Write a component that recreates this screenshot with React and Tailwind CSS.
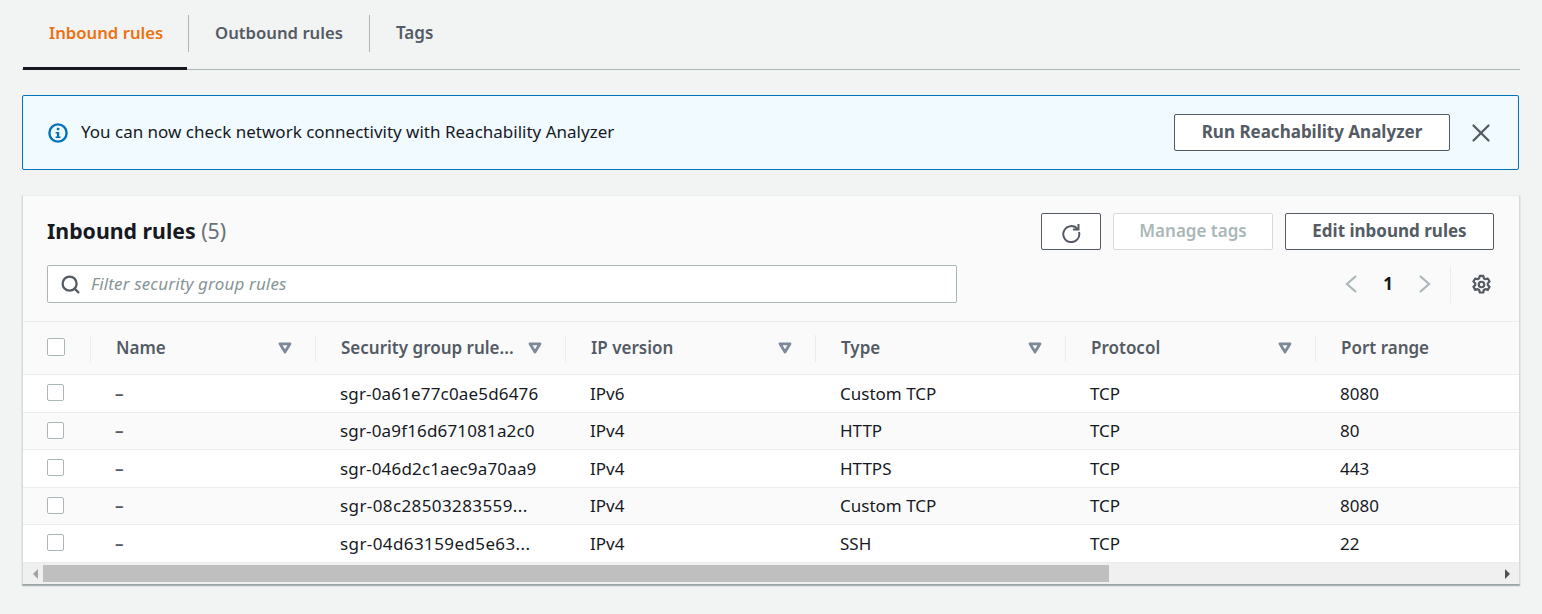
import { X, Search } from 'lucide-react'

const columns = [
  { label: 'Name', width: 'w-[225px]' },
  { label: 'Security group rule...', width: 'w-[250px]' },
  { label: 'IP version', width: 'w-[250px]' },
  { label: 'Type', width: 'w-[250px]' },
  { label: 'Protocol', width: 'w-[250px]' },
]

const rows = [
  { id: 'sgr-0a61e77c0ae5d6476', ip: 'IPv6', type: 'Custom TCP', port: '8080', height: 'h-[38px]', spacing: 'tracking-[0.16px]' },
  { id: 'sgr-0a9f16d671081a2c0', ip: 'IPv4', type: 'HTTP', port: '80', height: 'h-[37px]', spacing: 'tracking-[0.16px]' },
  { id: 'sgr-046d2c1aec9a70aa9', ip: 'IPv4', type: 'HTTPS', port: '443', height: 'h-[38px]', spacing: 'tracking-[0.16px]' },
  { id: 'sgr-08c28503283559...', ip: 'IPv4', type: 'Custom TCP', port: '8080', height: 'h-[37px]', spacing: 'tracking-[0.4px]' },
  { id: 'sgr-04d63159ed5e63...', ip: 'IPv4', type: 'SSH', port: '22', height: 'h-[38px]', spacing: 'tracking-[0.4px]' },
]

function Checkbox({ size = 'w-[17px] h-[17px]' }) {
  return <span className={`block ${size} bg-white border border-[#aab7b8] rounded-[2px]`} />
}

function SortIcon() {
  return (
    <svg width="14" height="12" viewBox="0 0 14 12" fill="none">
      <path d="M2 1.800h10L7 10z" stroke="#7d8998" strokeWidth="2.800" strokeLinejoin="round" />
    </svg>
  )
}

function RefreshIcon() {
  return (
    <svg width="22" height="22" viewBox="0 0 22 22" fill="none" stroke="#545b64" strokeWidth="2">
      <path d="M17.6 8.200A8 8 0 1 0 19 11" />
      <path d="M18.500 3v5.600h-5.600" />
    </svg>
  )
}

function InfoIcon() {
  return (
    <svg width="20" height="20" viewBox="0 0 20 20" fill="none">
      <circle cx="10" cy="10" r="8.600" stroke="#0073bb" strokeWidth="2.400" />
      <rect x="8.800" y="4.800" width="2.600" height="2.400" fill="#0073bb" />
      <path d="M7.600 9h3.600v4.400h1.300v1.600H7.600v-1.600h1.300v-2.800H7.600z" fill="#0073bb" />
    </svg>
  )
}

function GearIcon() {
  return (
    <svg width="21" height="21" viewBox="0 0 20 20" fill="none" stroke="#545b64" strokeWidth="2.100" strokeLinejoin="round">
      <path d="M8.300 1.800h3.400l.5 2.300 1.500.9 2.300-.7 1.700 2.900-1.700 1.600v1.800l1.700 1.600-1.700 2.900-2.300-.7-1.500.9-.5 2.300H8.300l-.5-2.300-1.500-.9-2.300.7-1.700-2.900 1.700-1.600V8.800L2.300 7.200 4 4.300l2.300.7 1.500-.9z" />
      <circle cx="10" cy="10" r="2.600" />
    </svg>
  )
}

function Chevron({ dir }) {
  return (
    <svg width="14" height="20" viewBox="0 0 14 20" fill="none" stroke="#aab7b8" strokeWidth="2.200">
      <path d={dir === 'left' ? 'M12 2 3 10l9 8' : 'M2 2l9 8-9 8'} />
    </svg>
  )
}

export default function App() {
  return (
    <div
      className="min-h-[614px] bg-[#f2f3f3] pl-[22px] pr-[22px] text-[17px] text-[#16191f]"
      style={{ fontFamily: '"Noto Sans", sans-serif' }}
    >
      <div className="flex h-[70px] pl-px border-b border-[#aab7b8] w-[1498px]">
        <div className="w-[164px] h-[70px] border-b-[3px] border-[#16191f] pl-[26px] pt-[20px] leading-[26px] text-[16.7px] font-semibold text-[#ec7211]">
          Inbound rules
        </div>
        <div className="w-[181px] mt-[15px] h-[37px] border-l border-[#aab7b8] ml-px pl-[26px] pt-[5px] leading-[26px] text-[16.7px] font-semibold text-[#545b64]">
          Outbound rules
        </div>
        <div className="mt-[15px] h-[37px] border-l border-[#aab7b8] pl-[26px] pt-[5px] leading-[26px] text-[17px] font-semibold text-[#545b64]">
          Tags
        </div>
      </div>

      <div className="mt-[25px] w-[1497px] h-[75px] flex items-center bg-[#f1faff] border border-[#0073bb] rounded-[2px] pl-[25px]">
        <InfoIcon />
        <span className="ml-[13px] leading-[24px] -translate-y-px">You can now check network connectivity with Reachability Analyzer</span>
        <button className="ml-auto w-[276px] h-[37px] pb-[2px] bg-white border border-[#545b64] rounded-[2px] font-bold text-[#545b64] leading-[24px]">
          Run Reachability Analyzer
        </button>
        <X className="ml-[16px] mr-[22px]" size={30} color="#545b64" strokeWidth={1.8} />
      </div>

      <div className="mt-[25px] w-[1498px] h-[390px] bg-white border border-[#d5dbdb] border-t-[#eaeded] border-b-[#9aa5a6] shadow-[0_1px_1px_rgba(0,28,36,0.3)] flex flex-col overflow-hidden">
        <div className="h-[126px] bg-[#fafafa] border-b border-[#eaeded] pl-[24px] pr-[25px] flex flex-col">
          <div className="flex items-start pt-[17px]">
            <h2 className="text-[21.3px] leading-[36px] font-bold">
              Inbound rules <span className="font-normal text-[#687078]">(5)</span>
            </h2>
            <div className="ml-auto flex gap-[12px]">
              <button className="w-[60px] h-[37px] flex items-center justify-center bg-white border border-[#545b64] rounded-[2px]">
                <RefreshIcon />
              </button>
              <button className="w-[160px] h-[37px] pb-[2px] bg-white border border-[#d5dbdb] rounded-[2px] font-semibold text-[#aab7b8]">
                Manage tags
              </button>
              <button className="w-[209px] h-[37px] pb-[2px] bg-white border border-[#545b64] rounded-[2px] font-bold text-[#545b64]">
                Edit inbound rules
              </button>
            </div>
          </div>
          <div className="flex items-center mt-[15px]">
            <div className="w-[910px] h-[38px] flex items-center bg-white border border-[#aab7b8] rounded-[2px] pl-[12px]">
              <Search size={21} color="#545b64" strokeWidth={2.600} />
              <span className="ml-[10px] italic text-[#879596] tracking-[0.15px]">Filter security group rules</span>
            </div>
            <div className="ml-auto flex items-center">
              <Chevron dir="left" />
              <span className="mx-[25px] font-bold leading-[24px]">1</span>
              <Chevron dir="right" />
              <span className="w-px h-[37px] bg-[#eaeded] ml-[18px] mr-[20px]" />
              <GearIcon />
              <span className="w-px ml-[1px]" />
            </div>
          </div>
        </div>

        <div className="h-[53px] flex items-center bg-[#fafafa] border-b border-[#eaeded]">
          <div className="w-[67px] pl-[24px] pb-[2px]">
            <Checkbox size="w-[18px] h-[18px]" />
          </div>
          {columns.map((col) => (
            <div key={col.label} className={`${col.width} h-[27px] flex items-center border-l border-[#eaeded] pl-[25px] pr-[23px]`}>
              <span className="font-semibold text-[#545b64] whitespace-nowrap">{col.label}</span>
              <span className="ml-auto flex"><SortIcon /></span>
            </div>
          ))}
          <div className="flex-1 h-[27px] flex items-center border-l border-[#eaeded] pl-[25px]">
            <span className="font-semibold text-[#545b64]">Port range</span>
          </div>
        </div>

        {rows.map((row, i) => (
          <div
            key={row.id}
            className={`${row.height} flex items-center border-b border-[#eaeded] ${i % 2 === 1 ? 'bg-[#fafafa]' : 'bg-white'}`}
          >
            <div className="w-[67px] pl-[24px] pb-[2px]"><Checkbox /></div>
            <div className="w-[225px] pl-[25px] text-[#545b64] font-semibold">–</div>
            <div className={`w-[250px] pl-[25px] ${row.spacing}`}>{row.id}</div>
            <div className="w-[250px] pl-[25px]">{row.ip}</div>
            <div className="w-[250px] pl-[25px]">{row.type}</div>
            <div className="w-[250px] pl-[25px]">TCP</div>
            <div className="flex-1 pl-[25px]">{row.port}</div>
          </div>
        ))}

        <div className="flex-1 flex items-center bg-[#f0f0f0]">
          <span className="w-[20px] flex justify-end pr-[5px]">
            <span className="w-0 h-0 border-y-[5px] border-y-transparent border-r-[5px] border-r-[#a3a3a3]" />
          </span>
          <div className="w-[1066px] h-[17px] bg-[#bfbfbf]" />
          <span className="ml-auto mr-[9px] w-0 h-0 border-y-[5px] border-y-transparent border-l-[5px] border-l-[#505050]" />
        </div>
      </div>
    </div>
  )
}
